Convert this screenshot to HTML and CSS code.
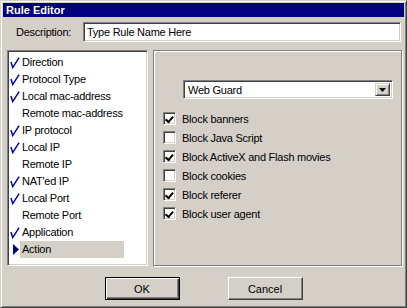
FILE: index.html
```html
<!DOCTYPE html>
<html lang="en">
<head>
    <meta charset="UTF-8">
    <title>Rule Editor</title>
    <link rel="stylesheet" href="styles.css">
</head>
<body>
<div class="window">
    <div class="titlebar">Rule Editor</div>

    <div class="desc-row">
        <span class="desc-label">Description:</span>
        <div class="textbox">Type Rule Name Here</div>
    </div>

    <div class="main">
        <ul class="list">
            <li class="on"><span class="mark"><svg width="11" height="12" viewBox="0 0 11 12"><path d="M1 5 L3 11 L10 0" fill="none" stroke="#0000a0" stroke-width="1.6"/></svg></span><span class="txt">Direction</span></li>
            <li class="on"><span class="mark"><svg width="11" height="12" viewBox="0 0 11 12"><path d="M1 5 L3 11 L10 0" fill="none" stroke="#0000a0" stroke-width="1.6"/></svg></span><span class="txt">Protocol Type</span></li>
            <li class="on"><span class="mark"><svg width="11" height="12" viewBox="0 0 11 12"><path d="M1 5 L3 11 L10 0" fill="none" stroke="#0000a0" stroke-width="1.6"/></svg></span><span class="txt">Local mac-address</span></li>
            <li><span class="mark"></span><span class="txt">Remote mac-address</span></li>
            <li class="on"><span class="mark"><svg width="11" height="12" viewBox="0 0 11 12"><path d="M1 5 L3 11 L10 0" fill="none" stroke="#0000a0" stroke-width="1.6"/></svg></span><span class="txt">IP protocol</span></li>
            <li class="on"><span class="mark"><svg width="11" height="12" viewBox="0 0 11 12"><path d="M1 5 L3 11 L10 0" fill="none" stroke="#0000a0" stroke-width="1.6"/></svg></span><span class="txt">Local IP</span></li>
            <li><span class="mark"></span><span class="txt">Remote IP</span></li>
            <li class="on"><span class="mark"><svg width="11" height="12" viewBox="0 0 11 12"><path d="M1 5 L3 11 L10 0" fill="none" stroke="#0000a0" stroke-width="1.6"/></svg></span><span class="txt">NAT'ed IP</span></li>
            <li class="on"><span class="mark"><svg width="11" height="12" viewBox="0 0 11 12"><path d="M1 5 L3 11 L10 0" fill="none" stroke="#0000a0" stroke-width="1.6"/></svg></span><span class="txt">Local Port</span></li>
            <li><span class="mark"></span><span class="txt">Remote Port</span></li>
            <li class="on"><span class="mark"><svg width="11" height="12" viewBox="0 0 11 12"><path d="M1 5 L3 11 L10 0" fill="none" stroke="#0000a0" stroke-width="1.6"/></svg></span><span class="txt">Application</span></li>
            <li class="current"><span class="mark"><svg width="6" height="11" viewBox="0 0 6 11"><path d="M0 0 L6 5.5 L0 11 Z" fill="#000080"/></svg></span><span class="txt">Action</span></li>
        </ul>

        <div class="group">
            <div class="combo">
                <div class="combo-text">Web Guard</div>
                <div class="combo-btn"><svg width="7" height="4" viewBox="0 0 7 4"><path d="M0 0 H7 L3.5 4 Z" fill="#000"/></svg></div>
            </div>
            <div class="checks">
                <div class="check-row"><span class="box checked"></span>Block banners</div>
                <div class="check-row"><span class="box"></span>Block Java Script</div>
                <div class="check-row"><span class="box checked"></span>Block ActiveX and Flash movies</div>
                <div class="check-row"><span class="box"></span>Block cookies</div>
                <div class="check-row"><span class="box checked"></span>Block referer</div>
                <div class="check-row"><span class="box checked"></span>Block user agent</div>
            </div>
        </div>
    </div>

    <div class="buttons">
        <button class="btn default">OK</button>
        <button class="btn">Cancel</button>
    </div>
</div>
</body>
</html>
```

FILE: styles.css
```css
body {
    margin: 0;
    font-family: "Liberation Sans", Arial, sans-serif;
    font-size: 11px;
    letter-spacing: -0.25px;
    color: #000;
}
.window {
    width: 407px;
    height: 308px;
    box-sizing: border-box;
    background: #d4d0c8;
    border-top: 1px solid #d4d0c8;
    border-left: 1px solid #d4d0c8;
    border-right: 1px solid #404040;
    border-bottom: 1px solid #404040;
    box-shadow: inset 1px 1px #fff, inset -1px -1px #808080;
    padding: 2px;
}
.titlebar {
    height: 14px;
    line-height: 14px;
    background: #000080;
    color: #fff;
    font-weight: bold;
    letter-spacing: 0;
    padding-left: 3px;
}
.desc-row {
    display: flex;
    align-items: center;
    margin-top: 5px;
    padding-left: 13px;
    padding-right: 3px;
}
.desc-label {
    width: 67px;
}
.textbox {
    flex: 1;
    height: 20px;
    box-sizing: border-box;
    background: #fff;
    border-top: 1px solid #808080;
    border-left: 1px solid #808080;
    border-right: 1px solid #fff;
    border-bottom: 1px solid #fff;
    box-shadow: inset 1px 1px #404040, inset -1px -1px #d4d0c8;
    padding: 2px 3px;
    line-height: 14px;
}
.main {
    display: flex;
    gap: 5px;
    margin-top: 8px;
    padding-left: 4px;
    padding-right: 2px;
    height: 216px;
}
.list {
    list-style: none;
    margin: 0;
    width: 141px;
    box-sizing: border-box;
    background: #fff;
    border-top: 1px solid #808080;
    border-left: 1px solid #808080;
    border-right: 1px solid #fff;
    border-bottom: 1px solid #fff;
    box-shadow: inset 1px 1px #404040, inset -1px -1px #d4d0c8;
    padding: 3px 0 0 2px;
}
.list li {
    display: flex;
    height: 17px;
    align-items: center;
    white-space: nowrap;
}
.mark {
    width: 10px;
    height: 17px;
    flex-shrink: 0;
    display: flex;
    align-items: center;
}
.current .mark {
    padding-left: 3px;
    width: 7px;
}
.txt {
    width: 102px;
    flex-shrink: 0;
    padding-left: 2px;
    line-height: 17px;
}
.current .txt {
    background: #d4d0c8;
}
.group {
    flex: 1;
    border: 1px solid #808080;
    box-shadow: inset 1px 1px #fff, 1px 1px #fff;
    padding: 29px 8px 0 9px;
}
.combo {
    display: flex;
    margin-left: 20px;
    height: 19px;
    box-sizing: border-box;
    background: #fff;
    border-top: 1px solid #808080;
    border-left: 1px solid #808080;
    border-right: 1px solid #fff;
    border-bottom: 1px solid #fff;
    box-shadow: inset 1px 1px #404040, inset -1px -1px #d4d0c8;
    padding: 2px;
}
.combo-text {
    flex: 1;
    padding-left: 2px;
    line-height: 15px;
}
.combo-btn {
    width: 15px;
    box-sizing: border-box;
    background: #d4d0c8;
    border-top: 1px solid #d4d0c8;
    border-left: 1px solid #d4d0c8;
    border-right: 1px solid #404040;
    border-bottom: 1px solid #404040;
    box-shadow: inset 1px 1px #fff, inset -1px -1px #808080;
    display: flex;
    align-items: center;
    justify-content: center;
}
.checks {
    margin-top: 10px;
}
.check-row {
    display: flex;
    align-items: center;
    height: 19px;
    white-space: nowrap;
}
.box {
    width: 13px;
    height: 13px;
    flex-shrink: 0;
    box-sizing: border-box;
    background: #fff;
    border-top: 1px solid #808080;
    border-left: 1px solid #808080;
    border-right: 1px solid #fff;
    border-bottom: 1px solid #fff;
    box-shadow: inset 1px 1px #404040, inset -1px -1px #d4d0c8;
    margin-right: 6px;
    position: relative;
}
.box.checked::after {
    content: "";
    position: absolute;
    left: 6px;
    top: 1px;
    width: 3px;
    height: 6px;
    border-right: 2px solid #000;
    border-bottom: 2px solid #000;
    transform: rotate(40deg);
    transform-origin: 0 0;
}
.buttons {
    display: flex;
    justify-content: center;
    gap: 48px;
    margin-top: 11px;
}
.btn {
    width: 75px;
    height: 23px;
    font-family: "Liberation Sans", Arial, sans-serif;
    font-size: 11px;
    background: #d4d0c8;
    border-top: 1px solid #fff;
    border-left: 1px solid #fff;
    border-right: 1px solid #404040;
    border-bottom: 1px solid #404040;
    box-shadow: inset -1px -1px #808080;
    padding: 0;
}
.btn.default {
    border: 1px solid #000;
    box-shadow: inset 1px 1px #fff, inset -1px -1px #404040, inset -2px -2px #808080;
}
```
